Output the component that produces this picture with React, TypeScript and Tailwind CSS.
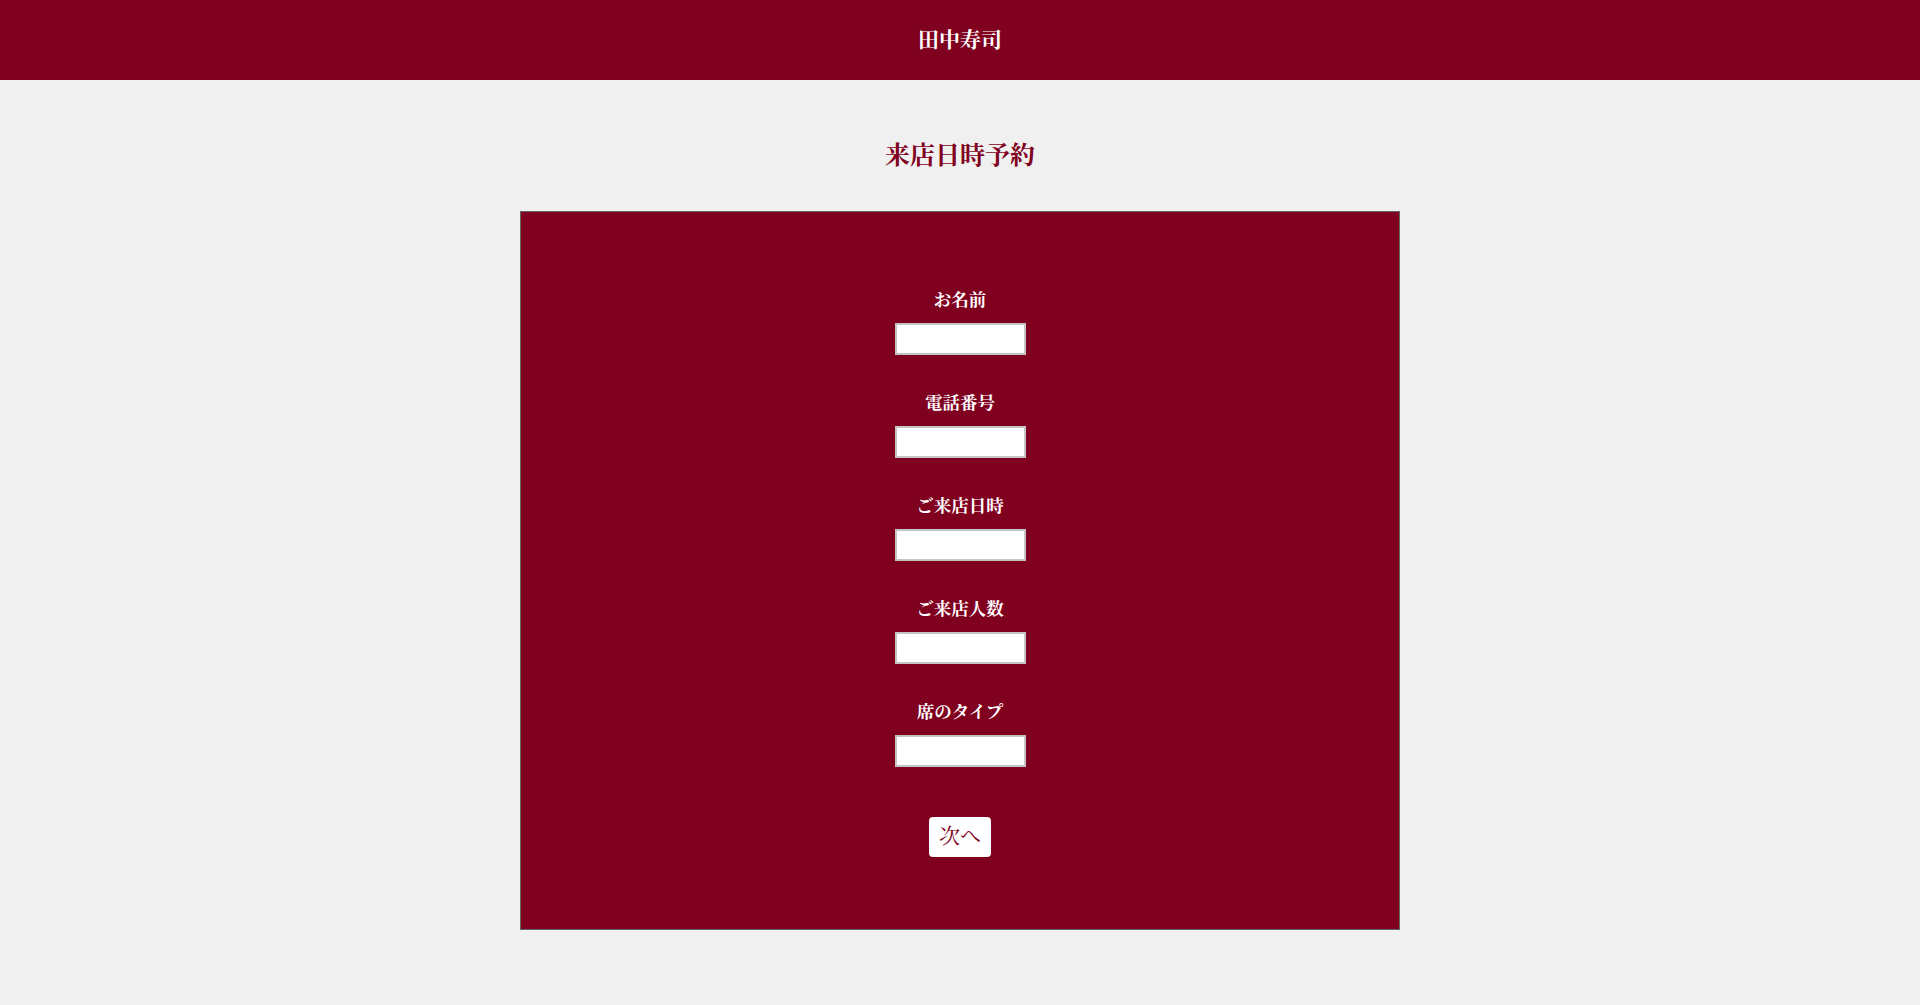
import React from "react";

const fields = ["お名前", "電話番号", "ご来店日時", "ご来店人数", "席のタイプ"];

export default function App() {
  return (
    <div className="min-h-[1005px] bg-[#f0f0f0] font-['Liberation_Serif','Noto_Serif_CJK_JP',serif]">
      <header className="flex h-20 items-center justify-center bg-[#800020]">
        <h1 className="text-[21px] leading-7 font-bold text-white">田中寿司</h1>
      </header>
      <main className="flex flex-col items-center">
        <h2 className="mt-[58px] text-[25px] leading-9 font-bold text-[#800020]">来店日時予約</h2>
        <form className="mt-[37px] flex w-[880px] flex-col items-center border border-[#666] bg-[#800020] pt-[76px] pb-[72px]">
          {fields.map((f, i) => (
            <div key={f} className={`flex flex-col items-center ${i > 0 ? "mt-[36px]" : ""}`}>
              <label className="text-[17.5px] leading-6 font-bold text-white">{f}</label>
              <input type="text" className="mt-[11px] h-8 w-[131px] border-2 border-[#c4c4c4] bg-white" />
            </div>
          ))}
          <button type="button" className="mt-[50px] h-10 w-[62px] rounded bg-white text-[21px] text-[#800020]">次へ</button>
        </form>
      </main>
    </div>
  );
}
